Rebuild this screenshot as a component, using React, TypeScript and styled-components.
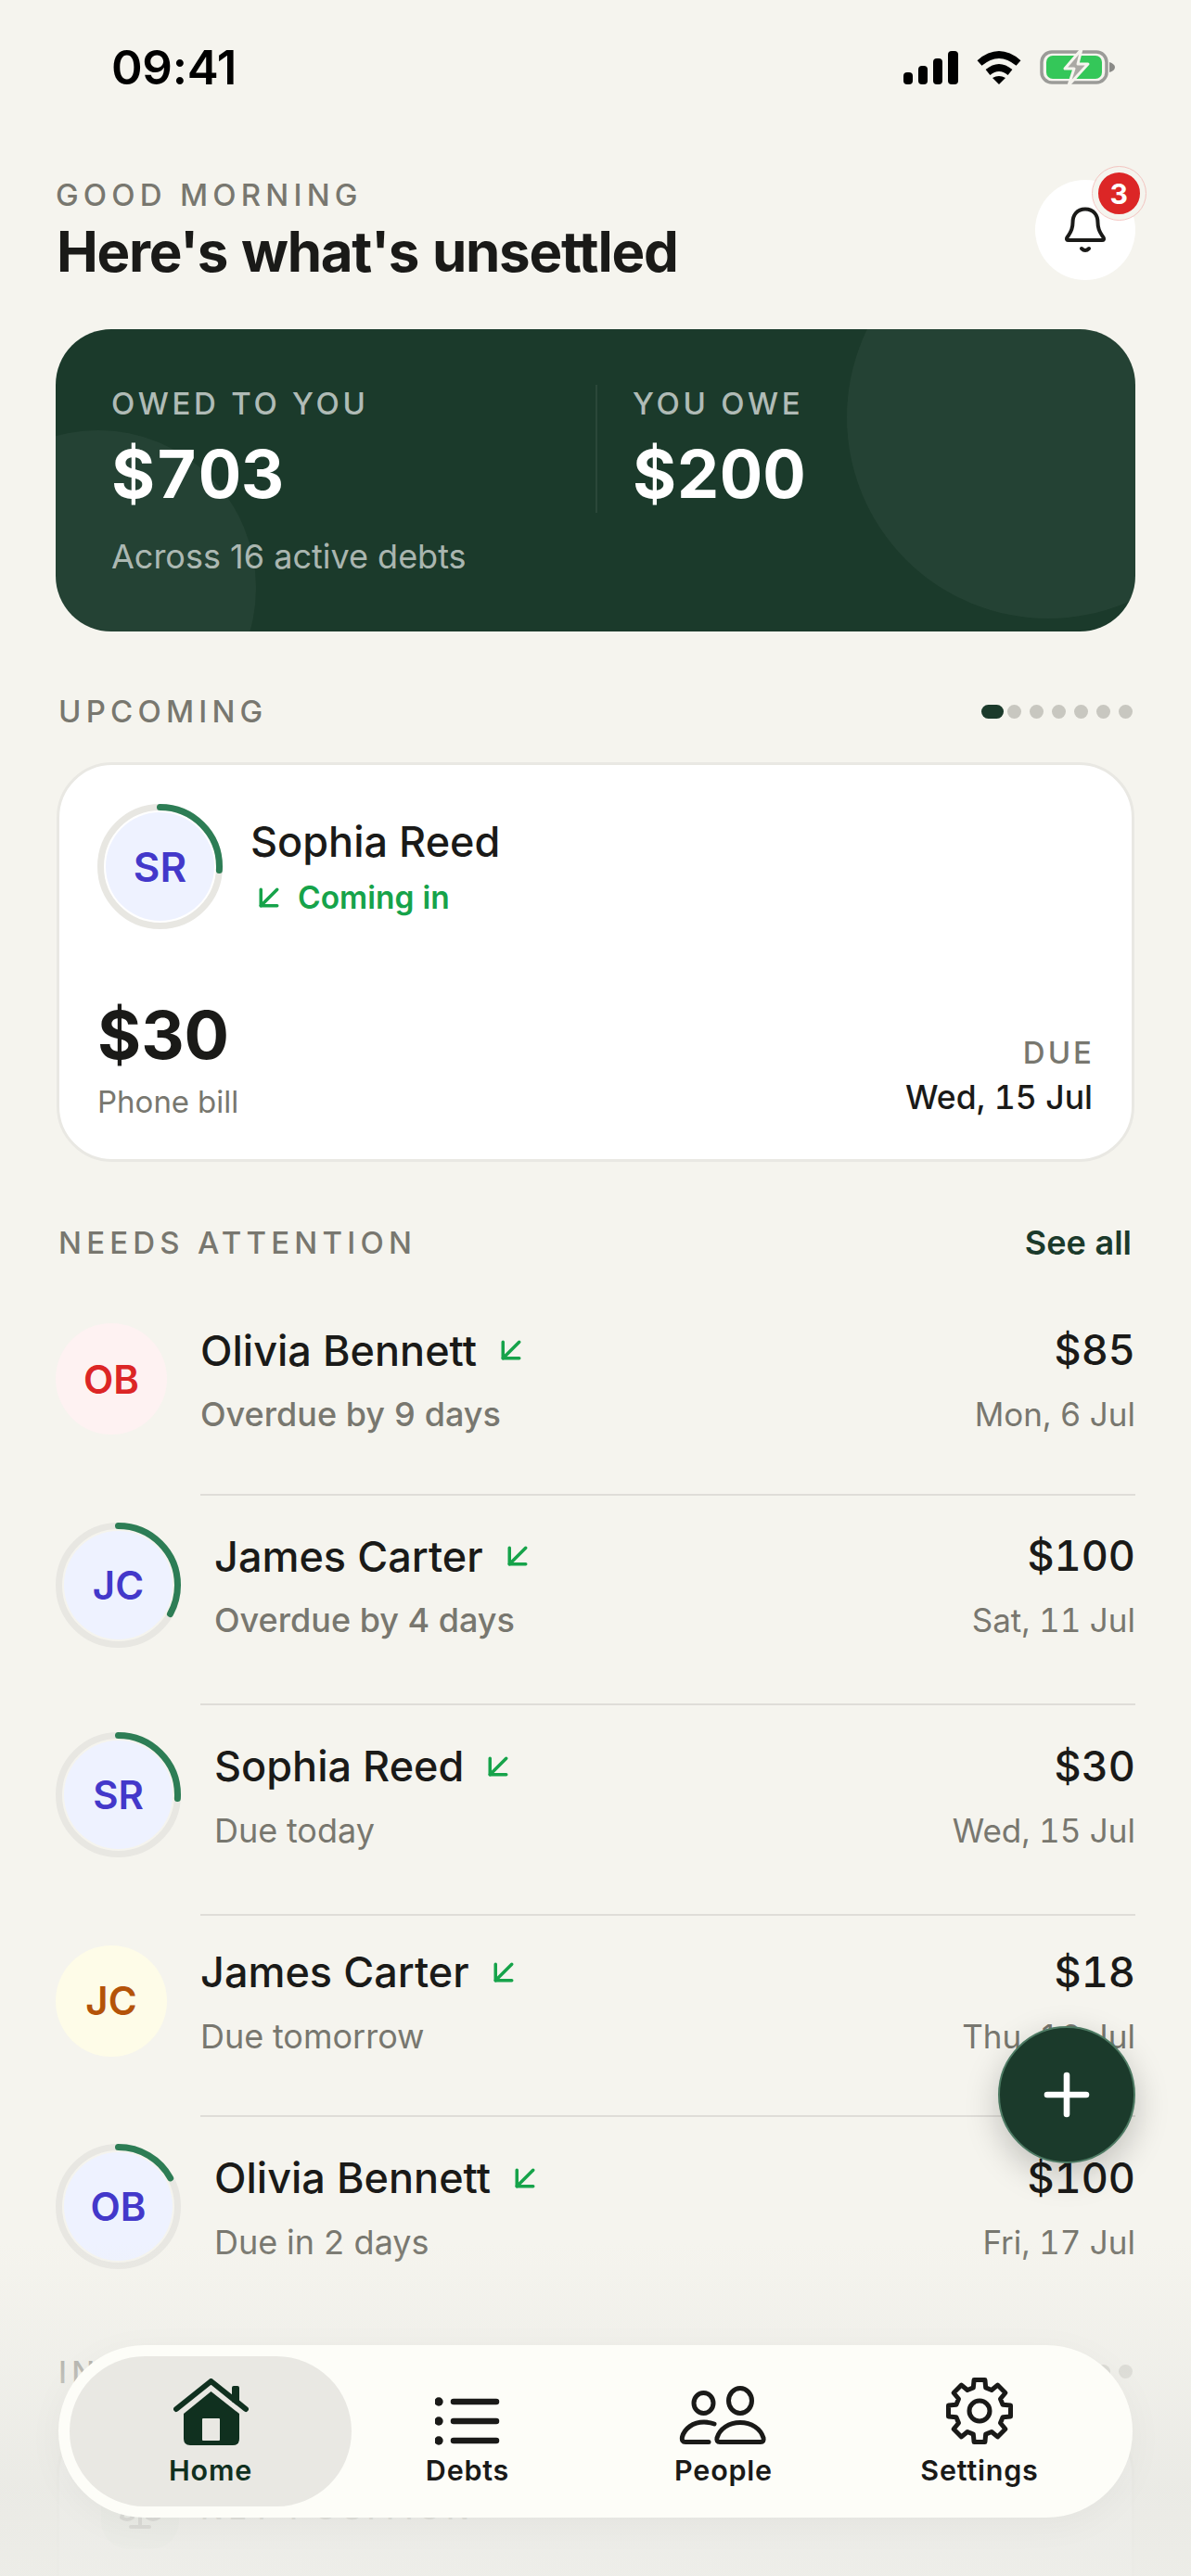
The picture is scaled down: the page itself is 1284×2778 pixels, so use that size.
import * as React from 'react'
import styled, { createGlobalStyle } from 'styled-components'
import { ArrowDownLeft, Plus, Scale } from 'lucide-react'

const paper = '#f5f4ee'
const ink = '#1a1a18'
const muted = '#78776f'
const forest = '#1b3a2b'
const green = '#16a34a'

const GlobalStyle = createGlobalStyle`
  html, body {
    margin: 0;
    padding: 0;
    background: ${paper};
  }
  * {
    box-sizing: border-box;
  }
`

const Screen = styled.div`
  position: relative;
  width: 1284px;
  height: 2778px;
  overflow: hidden;
  background: ${paper};
  font-family: Inter, 'Noto Sans', sans-serif;
  font-variant-numeric: tabular-nums;
  color: ${ink};
`

const Page = styled.div`
  padding: 0 60px;
`

const StatusBar = styled.div`
  height: 194px;
  margin: 0 -60px;
  padding: 47px 82px 0 120px;
  display: flex;
  justify-content: space-between;
  align-items: flex-start;
`

const Time = styled.div`
  font-size: 51px;
  line-height: 52px;
  font-weight: 600;
  font-variant-numeric: normal;
  color: #000;
  letter-spacing: -0.3px;
`

const StatusIcons = styled.div`
  display: flex;
  align-items: center;
  gap: 19px;
  padding-top: 3px;
`

const Header = styled.header`
  display: flex;
  justify-content: space-between;
  align-items: flex-start;
  height: 108px;
  margin-bottom: 53px;
`

const Greeting = styled.div`
  margin: -3px 0 0 0;
  font-size: 33px;
  line-height: 38px;
  font-weight: 500;
  letter-spacing: 5.2px;
  color: ${muted};
`

const Heading = styled.h1`
  margin: 6px 0 0 1px;
  font-size: 60px;
  line-height: 72px;
  font-weight: 700;
  letter-spacing: -1.25px;
`

const BellButton = styled.div`
  position: relative;
  width: 108px;
  height: 108px;
  border-radius: 50%;
  background: #fff;
  display: flex;
  align-items: center;
  justify-content: center;
`

const Badge = styled.div`
  position: absolute;
  top: -14px;
  right: -11px;
  width: 57px;
  height: 57px;
  border-radius: 50%;
  background: #dc2626;
  border: 6px solid ${paper};
  outline: 1px solid #f3c4c0;
  color: #fff;
  font-size: 30px;
  font-weight: 700;
  display: flex;
  align-items: center;
  justify-content: center;
`

const Hero = styled.section`
  position: relative;
  overflow: hidden;
  height: 326px;
  padding: 60px 60px 0;
  border-radius: 60px;
  background: ${forest};
  color: #fff;
`

const HeroBlob = styled.div<{ $left: number; $top: number; $size: number }>`
  position: absolute;
  left: ${p => p.$left}px;
  top: ${p => p.$top}px;
  width: ${p => p.$size}px;
  height: ${p => p.$size}px;
  border-radius: 50%;
  background: rgba(255, 255, 255, 0.045);
`

const HeroColumns = styled.div`
  position: relative;
  display: flex;
  height: 138px;
`

const HeroColumn = styled.div<{ $second?: boolean }>`
  flex: none;
  width: 522px;
  padding-left: ${p => (p.$second ? '38px' : '0')};
  border-left: ${p => (p.$second ? '2px solid rgba(255,255,255,0.07)' : 'none')};
`

const HeroLabel = styled.div`
  font-size: 33px;
  line-height: 40px;
  font-weight: 500;
  letter-spacing: 3.7px;
  color: rgba(255, 255, 255, 0.68);
`

const HeroAmount = styled.div`
  margin-top: 14px;
  font-size: 72px;
  line-height: 84px;
  font-weight: 700;
`

const HeroNote = styled.div`
  position: relative;
  margin-top: 25px;
  font-size: 36px;
  line-height: 44px;
  font-variant-numeric: normal;
  color: rgba(255, 255, 255, 0.65);
`

const SectionHead = styled.div<{ $top: number; $bottom: number }>`
  display: flex;
  justify-content: space-between;
  align-items: center;
  height: 40px;
  margin: ${p => p.$top}px 0 ${p => p.$bottom}px;
  padding: 0 4px 0 3px;
`

const SectionTitle = styled.div`
  font-size: 33px;
  line-height: 40px;
  font-weight: 500;
  letter-spacing: 5.2px;
  color: ${muted};
`

const SeeAll = styled.div`
  font-size: 36px;
  font-weight: 600;
  color: ${forest};
`

const Dots = styled.div`
  display: flex;
  align-items: center;
  gap: 9px;
  margin-right: -1px;
`

const Dot = styled.span<{ $active?: boolean }>`
  width: ${p => (p.$active ? '24px' : '15px')};
  height: 15px;
  margin-right: ${p => (p.$active ? '-5px' : '0')};
  border-radius: 8px;
  background: ${p => (p.$active ? forest : '#c8c7c0')};
`

const UpcomingCard = styled.section`
  height: 431px;
  margin: 0 1px;
  padding: 42px 42px 0 41px;
  border: 3px solid #e9e8e3;
  border-radius: 60px;
  background: #fff;
`

const CardTop = styled.div`
  display: flex;
  align-items: center;
  gap: 30px;
  height: 135px;
`

const CardPerson = styled.div`
  display: flex;
  flex-direction: column;
  gap: 8px;
  margin-top: 3px;
`

const CardName = styled.div`
  font-size: 45px;
  line-height: 56px;
  font-weight: 500;
`

const Direction = styled.div`
  display: flex;
  align-items: center;
  gap: 10px;
  height: 48px;
  margin-left: -1px;
  font-size: 33.5px;
  font-weight: 600;
  color: ${green};
`

const CardBottom = styled.div`
  display: flex;
  justify-content: space-between;
  align-items: flex-end;
  margin-top: 74px;
`

const CardAmount = styled.div`
  font-size: 72px;
  line-height: 80px;
  font-weight: 700;
  font-variant-numeric: normal;
`

const CardNote = styled.div`
  margin-top: 10px;
  font-size: 33px;
  line-height: 44px;
  color: ${muted};
`

const DueBlock = styled.div`
  text-align: right;
  margin-bottom: 4px;
`

const DueLabel = styled.div`
  font-size: 33px;
  line-height: 40px;
  font-weight: 500;
  letter-spacing: 3px;
  color: ${muted};
  margin-right: -2px;
`

const DueDate = styled.div`
  margin-top: 7px;
  font-size: 35.5px;
  line-height: 44px;
  font-weight: 500;
`

const List = styled.div`
  display: flex;
  flex-direction: column;
`

const Row = styled.div`
  display: flex;
  align-items: center;
  gap: 36px;
  padding: 29px 0 60.5px;
`

const Divider = styled.div`
  height: 2px;
  margin-left: 156px;
  background: #dfddd8;
`

const PlainAvatar = styled.div<{ $bg: string; $fg: string }>`
  flex: none;
  width: 120px;
  height: 120px;
  border-radius: 50%;
  display: flex;
  align-items: center;
  justify-content: center;
  background: ${p => p.$bg};
  color: ${p => p.$fg};
  font-size: 42px;
  font-weight: 600;
`

const RingBox = styled.div`
  position: relative;
  flex: none;
  width: 135px;
  height: 135px;
  display: flex;
  align-items: center;
  justify-content: center;
`

const RingSvg = styled.svg`
  position: absolute;
  inset: 0;
`

const RingDisc = styled.div<{ $large?: boolean }>`
  width: 117px;
  height: 117px;
  border-radius: 50%;
  display: flex;
  align-items: center;
  justify-content: center;
  background: #eef2ff;
  color: #4338ca;
  font-size: ${p => (p.$large ? '44px' : '42px')};
  font-weight: 600;
`

const RowText = styled.div`
  flex: 1;
  display: flex;
  flex-direction: column;
  padding: 2px 0 0;
  height: 126px;
`

const RowLine = styled.div<{ $gap: number }>`
  display: flex;
  justify-content: space-between;
  align-items: center;
  margin-top: ${p => p.$gap}px;
`

const NameWrap = styled.div`
  display: flex;
  align-items: center;
  gap: 16px;
  height: 60px;
  font-size: 45px;
  font-weight: 500;
`

const RowAmount = styled.div`
  font-size: 45px;
  line-height: 60px;
  font-weight: 500;
`

const RowSub = styled.div<{ $strong?: boolean }>`
  font-size: 36px;
  line-height: 48px;
  font-weight: ${p => (p.$strong ? 500 : 400)};
  color: ${muted};
`

const RowDate = styled.div`
  font-size: 35px;
  line-height: 48px;
  color: ${muted};
`

const NetCard = styled.div`
  height: 300px;
  margin: 0 1px;
  padding: 54px 45px;
  border: 3px solid #e9e8e3;
  border-radius: 60px;
  background: #fff;
  display: flex;
  align-items: flex-start;
  gap: 23px;
`

const NetIcon = styled.div`
  width: 84px;
  height: 84px;
  border-radius: 30px;
  background: #e4efe8;
  color: #555;
  display: flex;
  align-items: center;
  justify-content: center;
`

const NetLabel = styled.div`
  font-size: 33px;
  line-height: 80px;
  font-weight: 500;
  letter-spacing: 5.2px;
  color: ${muted};
`

const BottomFade = styled.div`
  position: absolute;
  left: 0;
  right: 0;
  bottom: 0;
  height: 360px;
  background: linear-gradient(
    180deg,
    rgba(236, 236, 231, 0) 0%,
    rgba(236, 236, 231, 0.62) 40%,
    rgba(233, 233, 228, 0.88) 75%,
    rgba(236, 236, 231, 0.92) 100%
  );
`

const Fab = styled.div`
  position: absolute;
  top: 2185px;
  right: 60px;
  width: 148px;
  height: 148px;
  border-radius: 50%;
  background: ${forest};
  border: 2px solid #4d7a63;
  color: #fff;
  display: flex;
  align-items: center;
  justify-content: center;
  box-shadow: 0 12px 36px rgba(0, 0, 0, 0.22);
`

const Nav = styled.nav`
  position: absolute;
  left: 63px;
  top: 2529px;
  width: 1158px;
  height: 186px;
  padding: 12px 27px;
  border-radius: 93px;
  background: #fdfdf8;
  display: grid;
  grid-template-columns: repeat(4, 1fr);
  box-shadow: 0 8px 40px rgba(0, 0, 0, 0.04);
`

const Tab = styled.div<{ $active?: boolean }>`
  display: flex;
  flex-direction: column;
  align-items: center;
  margin: ${p => (p.$active ? '0 -13px 0 -15px' : '0')};
  border-radius: 81px;
  background: ${p => (p.$active ? '#e9e8e3' : 'transparent')};
  color: ${p => (p.$active ? '#10301f' : ink)};
`

const TabIcon = styled.div`
  height: 100px;
  display: flex;
  align-items: flex-end;
  justify-content: center;
  padding-bottom: 4px;
`

const TabLabel = styled.div`
  margin-top: 3px;
  font-size: 30.5px;
  line-height: 40px;
  font-weight: 600;
  letter-spacing: 0.8px;
`

// 8 toothed gear, the package one has too soft teeth
const gearPath = () => {
  const points: string[] = []
  for (let i = 0; i < 8; i++) {
    const a = i * 45 - 90
    const teeth: [number, number][] = [[26, a - 15], [34, a - 10], [34, a + 10], [26, a + 15]]
    teeth.forEach(([r, deg]) => {
      const rad = (deg * Math.PI) / 180
      points.push(`${(37 + r * Math.cos(rad)).toFixed(1)} ${(37 + r * Math.sin(rad)).toFixed(1)}`)
    })
  }
  return `M${points.join('L')}Z`
}

const SignalIcon = () => (
  <svg width="59" height="36" viewBox="0 0 59 36">
    <rect x="0" y="23" width="10" height="13" rx="4" fill="#000" />
    <rect x="16" y="16" width="10" height="20" rx="4" fill="#000" />
    <rect x="32" y="8" width="10" height="28" rx="4" fill="#000" />
    <rect x="48" y="0" width="11" height="36" rx="4" fill="#000" />
  </svg>
)

const WifiIcon = () => (
  <svg width="50" height="37" viewBox="0 0 50 37">
    <path d="M4 14 Q25 -4 46 14" fill="none" stroke="#000" strokeWidth="7.5" />
    <path d="M13 24 Q25 14 37 24" fill="none" stroke="#000" strokeWidth="7.5" />
    <path d="M18 30 Q25 26 32 30 L25 37Z" fill="#000" />
  </svg>
)

const BatteryIcon = () => (
  <svg width="81" height="45" viewBox="0 0 81 45">
    <rect x="2" y="6" width="70" height="33" rx="11" fill="none" stroke="#9b9b98" strokeWidth="3.5" />
    <rect x="7" y="10" width="60" height="25" rx="7" fill="#34c759" />
    <path d="M75 17 Q81 19 81 22.5 Q81 26 75 28Z" fill="#8a8a87" />
    <path
      d="M45 3 L27 24 H37 L31 42 L52 19 H41Z"
      fill="#aaa9a4"
      stroke={paper}
      strokeWidth="3"
      strokeLinejoin="round"
    />
  </svg>
)

const BellIcon = () => (
  <svg width="60" height="60" viewBox="0 0 60 60" fill="none" stroke={ink} strokeWidth="4" strokeLinecap="round">
    <path d="M30 7.5 C21 7.5 16.5 14 16.5 22 C16.5 31 13 34 10.5 38 Q9 41 12 41 H48 Q51 41 49.5 38 C47 34 43.5 31 43.5 22 C43.5 14 39 7.5 30 7.5Z" />
    <path d="M26 50 Q30 54 34 50" />
  </svg>
)

const HomeIcon = () => (
  <svg width="81" height="72" viewBox="0 0 81 72">
    <path d="M3 33 L40.5 3 L78 33" fill="none" stroke="#10301f" strokeWidth="6" strokeLinecap="round" strokeLinejoin="round" />
    <rect x="63" y="8" width="8" height="18" rx="2" fill="#10301f" />
    <path d="M40.5 14 L71 38 V65 Q71 72 64 72 H18 Q11 72 11 65 V38Z" fill="#10301f" />
    <rect x="31" y="43" width="19" height="24" rx="1" fill="#e9e8e3" />
  </svg>
)

const DebtsIcon = () => (
  <svg width="70" height="52" viewBox="0 0 70 52" fill={ink}>
    <circle cx="4" cy="5" r="4.7" />
    <circle cx="4" cy="26" r="4.7" />
    <circle cx="4" cy="47" r="4.7" />
    <g stroke={ink} strokeWidth="6.5" strokeLinecap="round">
      <path d="M20 5 H66" />
      <path d="M20 26 H66" />
      <path d="M20 47 H66" />
    </g>
  </svg>
)

const PeopleIcon = () => (
  <svg width="96" height="64" viewBox="0 0 96 64" fill="none" stroke={ink} strokeWidth="5" strokeLinecap="round">
    <ellipse cx="26.5" cy="18.5" rx="10.5" ry="11" />
    <ellipse cx="66" cy="16" rx="12.5" ry="13.5" />
    <path d="M41 56 C44 46 54 39.5 66 39.5 C78 39.5 88 46 91 56 Q92 60.5 88 60.5 H44 Q40 60.5 41 56Z" />
    <path d="M38 41 C34 39.5 31 39 27 39 C15 39 6 46 3.5 55 Q2.5 60.5 7 60.5 H32" />
  </svg>
)

const GearIcon = () => (
  <svg width="74" height="74" viewBox="0 0 74 74" fill="none" stroke={ink} strokeWidth="5" strokeLinejoin="round">
    <path d={gearPath()} />
    <ellipse cx="37" cy="37" rx="11" ry="11" />
  </svg>
)

const Ring = ({ progress }: { progress: number }) => {
  const r = 64
  const c = 2 * Math.PI * r
  return (
    <RingSvg width="135" height="135" viewBox="0 0 135 135">
      <circle cx="67.5" cy="67.5" r={r} fill="none" stroke="#e8e7e2" strokeWidth="7" />
      <circle
        cx="67.5"
        cy="67.5"
        r={r}
        fill="none"
        stroke="#2d7d55"
        strokeWidth="7"
        strokeLinecap="round"
        strokeDasharray={`${progress * c} ${c}`}
        transform="rotate(-90 67.5 67.5)"
      />
    </RingSvg>
  )
}

const RingAvatar = ({ initials, progress, large }: { initials: string; progress: number; large?: boolean }) => (
  <RingBox>
    <Ring progress={progress} />
    <RingDisc $large={large}>{initials}</RingDisc>
  </RingBox>
)

type Debt = {
  name: string
  initials: string
  sub: string
  amount: string
  date: string
  strong?: boolean
  progress?: number
  bg?: string
  fg?: string
}

const debts: Debt[] = [
  { name: 'Olivia Bennett', initials: 'OB', sub: 'Overdue by 9 days', amount: '$85', date: 'Mon, 6 Jul', strong: true, bg: '#fef2f2', fg: '#dc2626' },
  { name: 'James Carter', initials: 'JC', sub: 'Overdue by 4 days', amount: '$100', date: 'Sat, 11 Jul', strong: true, progress: 0.33 },
  { name: 'Sophia Reed', initials: 'SR', sub: 'Due today', amount: '$30', date: 'Wed, 15 Jul', progress: 0.26 },
  { name: 'James Carter', initials: 'JC', sub: 'Due tomorrow', amount: '$18', date: 'Thu, 16 Jul', bg: '#fefce8', fg: '#b45309' },
  { name: 'Olivia Bennett', initials: 'OB', sub: 'Due in 2 days', amount: '$100', date: 'Fri, 17 Jul', progress: 0.17 },
]

const PageDots = () => (
  <Dots>
    <Dot $active />
    {[0, 1, 2, 3, 4, 5].map(i => <Dot key={i} />)}
  </Dots>
)

const App = () => (
  <Screen>
    <GlobalStyle />
    <Page>
      <StatusBar>
        <Time>09:41</Time>
        <StatusIcons>
          <SignalIcon />
          <WifiIcon />
          <BatteryIcon />
        </StatusIcons>
      </StatusBar>

      <Header>
        <div>
          <Greeting>GOOD MORNING</Greeting>
          <Heading>Here's what's unsettled</Heading>
        </div>
        <BellButton>
          <BellIcon />
          <Badge>3</Badge>
        </BellButton>
      </Header>

      <Hero>
        <HeroBlob $left={853} $top={-122} $size={434} />
        <HeroBlob $left={-124} $top={109} $size={340} />
        <HeroColumns>
          <HeroColumn>
            <HeroLabel>OWED TO YOU</HeroLabel>
            <HeroAmount>$703</HeroAmount>
          </HeroColumn>
          <HeroColumn $second>
            <HeroLabel>YOU OWE</HeroLabel>
            <HeroAmount>$200</HeroAmount>
          </HeroColumn>
        </HeroColumns>
        <HeroNote>Across 16 active debts</HeroNote>
      </Hero>

      <SectionHead $top={66} $bottom={35}>
        <SectionTitle>UPCOMING</SectionTitle>
        <PageDots />
      </SectionHead>

      <UpcomingCard>
        <CardTop>
          <RingAvatar initials="SR" progress={0.26} large />
          <CardPerson>
            <CardName>Sophia Reed</CardName>
            <Direction>
              <ArrowDownLeft size={42} strokeWidth={2} />
              Coming in
            </Direction>
          </CardPerson>
        </CardTop>
        <CardBottom>
          <div>
            <CardAmount>$30</CardAmount>
            <CardNote>Phone bill</CardNote>
          </div>
          <DueBlock>
            <DueLabel>DUE</DueLabel>
            <DueDate>Wed, 15 Jul</DueDate>
          </DueBlock>
        </CardBottom>
      </UpcomingCard>

      <SectionHead $top={67} $bottom={35}>
        <SectionTitle>NEEDS ATTENTION</SectionTitle>
        <SeeAll>See all</SeeAll>
      </SectionHead>

      <List>
        {debts.map((d, i) => (
          <React.Fragment key={i}>
            <Row>
              {d.progress !== undefined ? (
                <RingAvatar initials={d.initials} progress={d.progress} />
              ) : (
                <PlainAvatar $bg={d.bg || '#eee'} $fg={d.fg || ink}>{d.initials}</PlainAvatar>
              )}
              <RowText>
                <RowLine $gap={0}>
                  <NameWrap>
                    {d.name}
                    <ArrowDownLeft size={42} color={green} strokeWidth={2} />
                  </NameWrap>
                  <RowAmount>{d.amount}</RowAmount>
                </RowLine>
                <RowLine $gap={15}>
                  <RowSub $strong={d.strong}>{d.sub}</RowSub>
                  <RowDate>{d.date}</RowDate>
                </RowLine>
              </RowText>
            </Row>
            {i < debts.length - 1 && <Divider />}
          </React.Fragment>
        ))}
      </List>

      <SectionHead $top={30} $bottom={30}>
        <SectionTitle>INSIGHTS</SectionTitle>
        <PageDots />
      </SectionHead>

      <NetCard>
        <NetIcon>
          <Scale size={48} />
        </NetIcon>
        <NetLabel>NET POSITION</NetLabel>
      </NetCard>
    </Page>

    <BottomFade />

    <Fab>
      <Plus size={72} strokeWidth={2.2} />
    </Fab>

    <Nav>
      <Tab $active>
        <TabIcon><HomeIcon /></TabIcon>
        <TabLabel>Home</TabLabel>
      </Tab>
      <Tab>
        <TabIcon><DebtsIcon /></TabIcon>
        <TabLabel>Debts</TabLabel>
      </Tab>
      <Tab>
        <TabIcon><PeopleIcon /></TabIcon>
        <TabLabel>People</TabLabel>
      </Tab>
      <Tab>
        <TabIcon><GearIcon /></TabIcon>
        <TabLabel>Settings</TabLabel>
      </Tab>
    </Nav>
  </Screen>
)

export default App
